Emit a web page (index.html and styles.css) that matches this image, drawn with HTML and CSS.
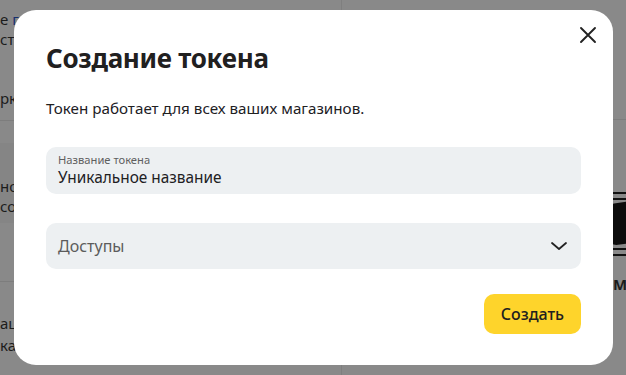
FILE: index.html
```html
<!DOCTYPE html>
<html lang="ru">
<head>
<meta charset="utf-8">
<title>Создание токена</title>
<link rel="stylesheet" href="styles.css">
</head>
<body>
<div class="page">
  <div class="page-left">
    <div class="bg-line t1"><span>е</span> <span class="link">гл</span></div>
    <div class="bg-line t2">стр</div>
    <div class="bg-line t3">рк</div>
    <div class="bg-sep s1"></div>
    <div class="bg-band">
      <div class="bg-line t4">но</div>
      <div class="bg-line t5">со</div>
    </div>
    <div class="bg-sep s2"></div>
    <div class="bg-line t6">ац</div>
    <div class="bg-line t7">ка</div>
  </div>
  <div class="page-right">
    <div class="bg-sep s3"></div>
    <div class="bg-pic">
      <div class="pic-lines"></div>
      <div class="pic-blob"></div>
      <div class="pic-lines"></div>
    </div>
    <div class="bg-cap">М</div>
  </div>
</div>

<div class="modal" role="dialog" aria-labelledby="modal-title">
  <button class="close" aria-label="Закрыть">
    <svg width="18" height="18" viewBox="0 0 18 18" fill="none" stroke="#222" stroke-width="1.9" stroke-linecap="round">
      <path d="M2 2 L16 16 M16 2 L2 16"/>
    </svg>
  </button>
  <h1 id="modal-title" class="title">Создание токена</h1>
  <p class="desc">Токен работает для всех ваших магазинов.</p>
  <div class="field field-text">
    <span class="field-label">Название токена</span>
    <span class="field-value">Уникальное название</span>
  </div>
  <div class="field field-select">
    <span class="field-placeholder">Доступы</span>
    <svg width="18" height="10" viewBox="0 0 18 10" fill="none" stroke="#222" stroke-width="1.8" stroke-linecap="round" stroke-linejoin="round">
      <path d="M2 2 L9 8 L16 2"/>
    </svg>
  </div>
  <div class="actions">
    <button class="btn-primary">Создать</button>
  </div>
</div>
</body>
</html>
```
FILE: styles.css
```css
* { box-sizing: border-box; }
html, body { margin: 0; padding: 0; }
body {
  width: 626px;
  height: 375px;
  overflow: hidden;
  position: relative;
  font-family: "Noto Sans", "Open Sans", sans-serif;
  background: #898989;
}

.page {
  display: grid;
  grid-template-columns: 342px 1fr;
  height: 375px;
  background: #898989;
  color: #1c1c1c;
}
.page-left {
  display: flex;
  flex-direction: column;
  border-right: 1px solid #7f7f7f;
  overflow: hidden;
}
.bg-line {
  font-size: 15px;
  line-height: 18px;
  white-space: nowrap;
  padding-left: 0;
}
.bg-line .link { color: #16306e; }
.t1 { margin-top: 10px; }
.t2 { margin-top: 2px; }
.t3 { margin-top: 41px; }
.bg-sep { height: 1px; background: #7d7d7d; }
.s1 { margin-top: 13px; }
.bg-band {
  background: #858585;
  margin-top: 22px;
  padding-top: 34px;
  padding-bottom: 8px;
}
.t5 { margin-top: 2px; }
.s2 { margin-top: 58px; }
.t6 { margin-top: 32px; }
.t7 { margin-top: 4px; }

.page-right {
  display: flex;
  flex-direction: column;
  align-items: flex-end;
  overflow: hidden;
}
.s3 { margin-top: 119px; width: 100%; }
.bg-pic {
  margin-top: 72px;
  width: 18px;
  display: flex;
  flex-direction: column;
  gap: 3px;
}
.pic-lines {
  height: 8px;
  border-top: 2px solid #111;
  border-bottom: 2px solid #111;
}
.pic-blob {
  height: 42px;
  background: #0c0c0c;
  border-radius: 6px 0 0 10px;
  transform: skewY(-8deg);
}
.bg-cap {
  margin-top: 18px;
  width: 13px;
  font-weight: 700;
  font-size: 15px;
  color: #1c1c1c;
}

/* modal */
.modal {
  position: absolute;
  left: 14px;
  top: 10px;
  width: 599px;
  height: 355px;
  background: #fff;
  border-radius: 22px;
  padding: 30px 32px 31px 32px;
  display: flex;
  flex-direction: column;
  color: #21201f;
}
.close {
  position: absolute;
  top: 16px;
  right: 16px;
  width: 18px;
  height: 18px;
  padding: 0;
  border: 0;
  background: none;
  display: flex;
}
.title {
  margin: 0;
  font-size: 26px;
  line-height: 36px;
  font-weight: 700;
  letter-spacing: -0.3px;
}
.desc {
  margin: 22px 0 0;
  font-size: 15.2px;
  line-height: 20px;
}
.field {
  background: #edf0f2;
  border-radius: 10px;
  height: 47px;
  padding: 0 12px;
}
.field-text {
  margin-top: 29px;
  display: flex;
  flex-direction: column;
  justify-content: center;
  padding-top: 1px;
}
.field-label {
  font-size: 11.2px;
  line-height: 14px;
  color: #5f5f5f;
}
.field-value {
  font-size: 15.4px;
  line-height: 21px;
  color: #21201f;
}
.field-select {
  margin-top: 29px;
  display: flex;
  align-items: center;
  justify-content: space-between;
  padding-right: 13px;
}
.field-placeholder {
  font-size: 16px;
  color: #5c5c5c;
}
.actions {
  margin-top: 25px;
  display: flex;
  justify-content: flex-end;
}
.btn-primary {
  height: 40px;
  padding: 0 17px;
  border: 0;
  border-radius: 10px;
  background: #fed42b;
  font-family: inherit;
  font-size: 16px;
  font-weight: 500;
  color: #21201f;
}
```
